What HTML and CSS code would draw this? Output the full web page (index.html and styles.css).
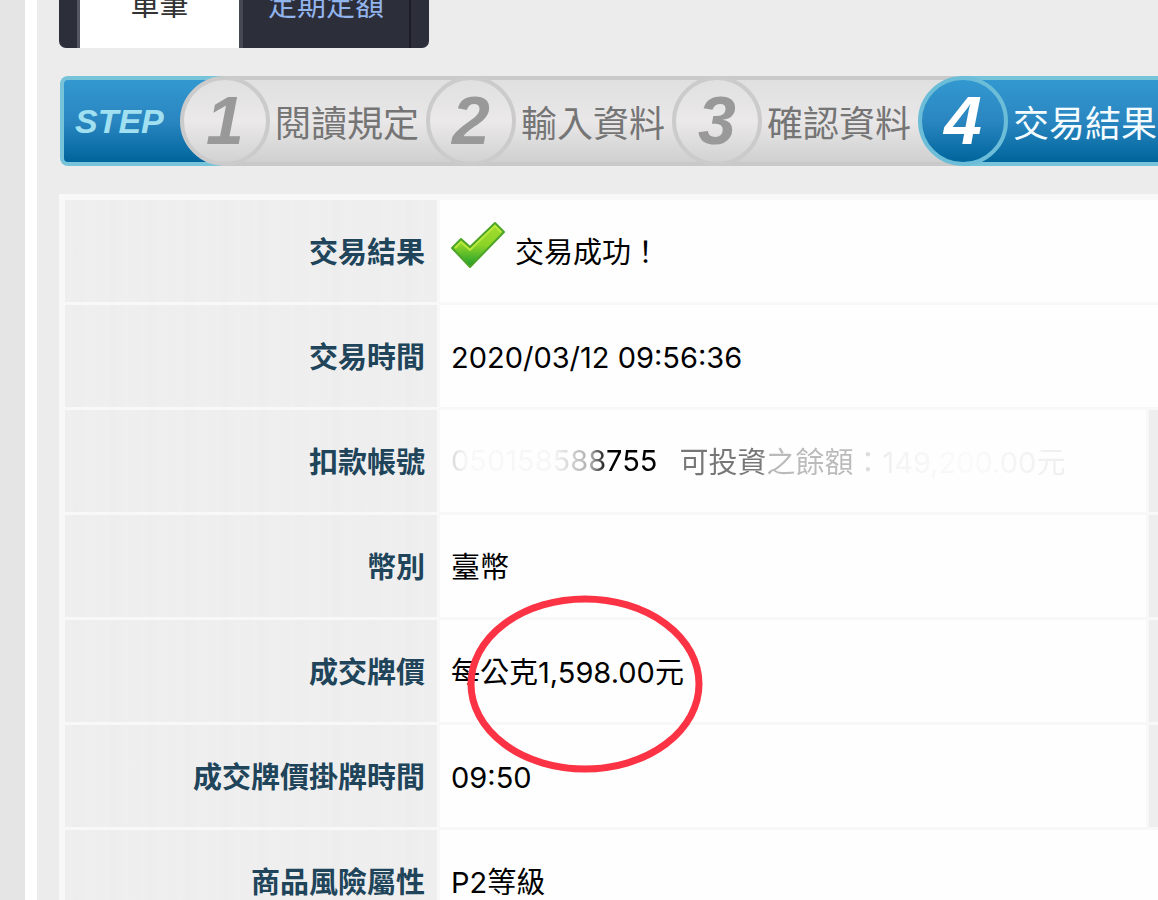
FILE: index.html
```html
<!DOCTYPE html>
<html lang="zh-Hant">
<head>
    <meta charset="UTF-8">
    <meta name="viewport" content="width=device-width, initial-scale=1.0">
    <title>交易結果</title>
    <link rel="stylesheet" href="styles.css">
</head>
<body>

    <main class="page">
        <!-- Tabs -->
        <nav class="tabs">
            <a href="#single" class="tab active">單筆</a>
            <a href="#regular" class="tab">定期定額</a>
        </nav>

        <!-- Steps -->
        <div class="steps">
            <span class="step-title">STEP</span>
            <ol class="step-list">
                <li class="step"><span class="circle">1</span>閱讀規定</li>
                <li class="step"><span class="circle">2</span>輸入資料</li>
                <li class="step"><span class="circle">3</span>確認資料</li>
                <li class="step current"><span class="circle">4</span>交易結果</li>
            </ol>
        </div>

        <!-- Result -->
        <table class="result">
            <tr>
                <th scope="row">交易結果</th>
                <td colspan="2">
                    <div class="status">
                        <svg class="tick" width="54" height="48" viewBox="0 0 54 48" aria-hidden="true">
                            <defs>
                                <linearGradient id="tick" x1="0" y1="0" x2="0" y2="1">
                                    <stop offset="0" stop-color="#a4dc2c"/>
                                    <stop offset="0.5" stop-color="#8cd428"/>
                                    <stop offset="1" stop-color="#1c9c2c"/>
                                </linearGradient>
                            </defs>
                            <path d="M1 27 L10 18 L19 26 L44 2 L53 11 L19 46 Z" fill="url(#tick)" stroke="#4ea428" stroke-width="2" stroke-linejoin="round"/>
                            <path d="M4 27 L10 21 L19 29 L44 5 L50 11" fill="none" stroke="#b8e83c" stroke-width="2"/>
                        </svg>
                        <span>交易成功！</span>
                    </div>
                </td>
            </tr>
            <tr>
                <th scope="row">交易時間</th>
                <td colspan="2"><span class="num">2020/03/12 09:56:36</span></td>
            </tr>
            <tr>
                <th scope="row">扣款帳號</th>
                <td>
                    <div class="account">
                        <span class="num account-no">050158588755</span>
                        <span class="balance">可投資之餘額：<span class="num">149,200.00</span>元</span>
                    </div>
                </td>
                <td class="side"></td>
            </tr>
            <tr>
                <th scope="row">幣別</th>
                <td>臺幣</td>
                <td class="side"></td>
            </tr>
            <tr>
                <th scope="row">成交牌價</th>
                <td class="price">每公克<span class="num">1,598.00</span>元
                    <svg class="mark" width="236" height="178" viewBox="0 0 236 178" aria-hidden="true">
                        <ellipse cx="118" cy="89" rx="114" ry="85" fill="none" stroke="#fc3344" stroke-width="7"/>
                    </svg>
                </td>
                <td class="side"></td>
            </tr>
            <tr>
                <th scope="row">成交牌價掛牌時間</th>
                <td><span class="num">09:50</span></td>
                <td class="side"></td>
            </tr>
            <tr>
                <th scope="row">商品風險屬性</th>
                <td colspan="2"><span class="num">P2</span>等級</td>
            </tr>
        </table>
    </main>

</body>
</html>
```
FILE: styles.css
```css
* {
    box-sizing: border-box;
}
body {
    margin: 0;
    height: 100vh;
    overflow: hidden;
    padding-left: 25px;
    background: #e5e5e5;
    font-family: "Noto Sans CJK TC", sans-serif;
    font-size: 29px;
    color: #000;
}
.page {
    min-height: 100vh;
    padding-left: 22px;
    border-left: 12px solid #fff;
    background: #ececec;
    overflow: hidden;
}
.tabs {
    display: flex;
    width: 370px;
    height: 88px;
    margin-top: -40px;
    padding-left: 18px;
    background: #2c2e3a;
    border-radius: 7px;
}
.tab {
    width: 168px;
    text-align: center;
    line-height: 86px;
    color: #92b4ec;
    text-decoration: none;
    border-right: 2px solid #1b1c25;
}
.tab.active {
    width: 166px;
    background: #fff;
    color: #333;
    border-left: 3px solid #555862;
    border-right: 4px solid #454953;
}
.steps {
    display: flex;
    height: 90px;
    margin: 28px 0;
    margin-left: 1px;
    white-space: nowrap;
}
.step-title {
    flex: none;
    width: 165px;
    padding-left: 11px;
    background: linear-gradient(#3398d0, #2a86c0 50%, #00659c);
    border: 4px solid #76c3da;
    border-right: 0;
    border-radius: 8px 0 0 8px;
    font: italic bold 34px/82px "Liberation Sans", sans-serif;
    color: #a0e0f0;
}
.step-list {
    display: flex;
    flex: 1;
    margin: 0;
    padding: 0;
    list-style: none;
}
.step {
    display: flex;
    flex: none;
    align-items: center;
    width: 246px;
    background: linear-gradient(#e0e0e0, #e9e7e8 50%, #d0d0d0);
    border: 4px solid #c9c9c9;
    border-width: 4px 0;
    font-size: 36px;
    line-height: 80px;
    color: #757575;
}
.circle {
    flex: none;
    width: 90px;
    height: 90px;
    margin: 0 5px 0 -45px;
    background: linear-gradient(#e0e0e0, #ebe9ea 50%, #d2d2d2);
    border: 4px solid #cbcbcb;
    border-radius: 50%;
    font: italic bold 68px/80px "Liberation Sans", sans-serif;
    text-align: center;
    color: #999;
}
.step.current {
    flex: 1 0 auto;
    background: linear-gradient(#3398d0, #2a86c0 50%, #00659c);
    border-color: #76c3da;
    color: #f4fcff;
}
.current .circle {
    background: linear-gradient(#3398d0, #2a86c0 50%, #00659c);
    border-color: #6bbdd8;
    color: #fff;
}
.result {
    width: 100%;
    border-collapse: separate;
    border-spacing: 0;
    border: 6px solid #f8f8f8;
    border-right: 0;
}
.result th,
.result td {
    height: 105px;
    padding: 0 12px 2px 11px;
    border-bottom: 3px solid #f8f8f8;
    background: #fefefe;
    text-align: left;
    white-space: nowrap;
}
.result th {
    width: 375px;
    border-right: 3px solid #f8f8f8;
    background: repeating-linear-gradient(90deg, #eee 0, #efefef 5px, #ededed 11px, #efefef 24px, #eee 37px);
    text-align: right;
    font-weight: 700;
    color: #20445a;
}
.result .side {
    width: 12px;
    padding: 0;
    border-left: 3px solid #f8f8f8;
    background: #eee;
}
.num {
    font-family: Inter, sans-serif;
    font-size: 29px;
}
.status {
    display: flex;
    align-items: center;
    gap: 10px;
}
.tick {
    margin-bottom: 10px;
}
.account {
    display: flex;
    align-items: center;
    gap: 22px;
}
/* faded digits hide the account number and the balance */
.account-no {
    background: linear-gradient(90deg, #d8d8d8, #f8f8f8 8%, #f6f6f6 50%, #ccc 60%, #aaa 68%, #000 76%);
    background-clip: text;
    -webkit-background-clip: text;
    color: transparent;
}
.balance {
    background: linear-gradient(90deg, #777, #777 21%, #bbb 24%, #bbb 45%, #ddd 49%, #f4f4f4 56%, #fafafa 75%, #eee);
    background-clip: text;
    -webkit-background-clip: text;
    color: transparent;
}
.price {
    position: relative;
}
.mark {
    position: absolute;
    top: -25px;
    left: 27px;
    z-index: 1;
}
```
